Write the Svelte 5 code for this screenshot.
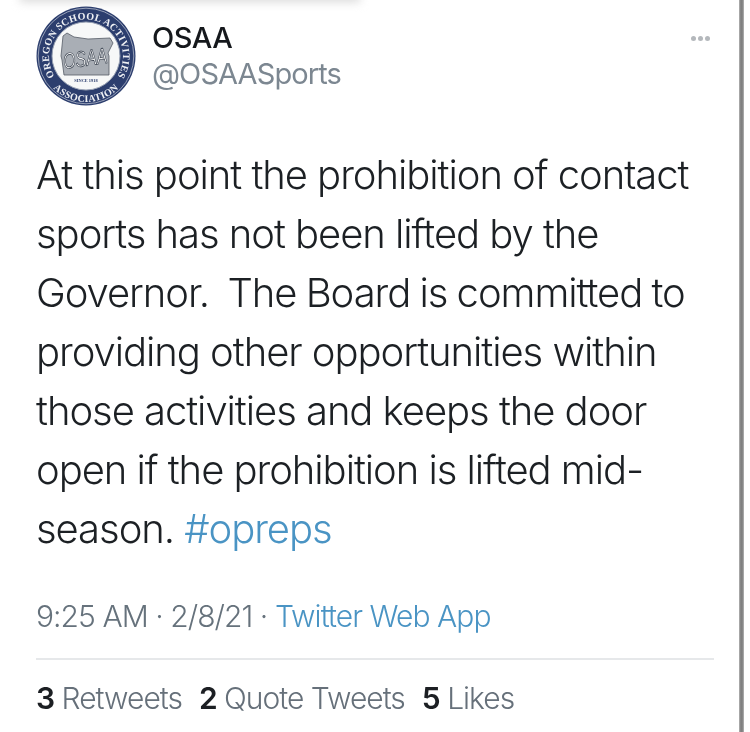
<script>
  const lines = [
    'At this point the prohibition of contact',
    'sports has not been lifted by the',
    'Governor.  The Board is committed to',
    'providing other opportunities within',
    'those activities and keeps the door',
    'open if the prohibition is lifted mid-'
  ];
</script>

<div class="page">
  <div class="topshade"></div>
  <main class="tweet">
    <header class="head">
      <svg class="logo" viewBox="0 0 100 100" aria-hidden="true">
        <defs>
          <path id="arcTop" d="M 18 69 A 37 37 0 1 1 82 69" />
          <path id="arcBottom" d="M 8.3 69.4 A 46 46 0 0 0 91.7 69.4" />
        </defs>
        <circle cx="50" cy="50" r="49.5" fill="#2c3e6e" />
        <circle cx="50" cy="50" r="47.8" fill="none" stroke="#dfe3ea" stroke-width="0.6" />
        <circle cx="50" cy="50" r="34" fill="#f7f8f8" stroke="#9aa3b5" stroke-width="1" />
        <path class="state" d="M27 30 L31 27 L38 31 L52 33 L74 32 L77 37 L72 47 L73 50 L73 69 L28 69 L26 54 L25 50 Z" />
        <text class="osaa" x="49" y="60" text-anchor="middle" textLength="44" lengthAdjust="spacingAndGlyphs" transform="rotate(-8 49 52)">OSAA</text>
        <text class="since" x="50" y="76" text-anchor="middle">SINCE 1918</text>
        <text class="ring"><textPath href="#arcTop" startOffset="50%" text-anchor="middle">OREGON SCHOOL ACTIVITIES</textPath></text>
        <text class="ring"><textPath href="#arcBottom" startOffset="50%" text-anchor="middle">ASSOCIATION</textPath></text>
      </svg>
      <div class="who">
        <div class="name">OSAA</div>
        <div class="handle">@OSAASports</div>
      </div>
      <div class="more"><i></i><i></i><i></i></div>
    </header>

    <div class="body">
      {#each lines as l, i}
        <div class="line" class:tight={i === 2}>{l}</div>
      {/each}
      <div class="line">season. <span class="link">#opreps</span></div>
    </div>

    <div class="meta">9:25 AM · 2/8/21 · <span class="link">Twitter Web App</span></div>
    <div class="rule"></div>
    <div class="stats">
      <span class="stat"><b>3</b> Retweets</span>
      <span class="stat"><b>2</b> Quote Tweets</span>
      <span class="stat"><b>5</b> Likes</span>
    </div>
  </main>
  <div class="edge"></div>
</div>

<style>
  :global(body) {
    margin: 0;
    background: #fff;
  }
  .page {
    position: relative;
    display: flex;
    width: 750px;
    height: 732px;
    overflow: hidden;
    background: #fff;
    font-family: Inter, "Liberation Sans", Arial, sans-serif;
  }
  .topshade {
    position: absolute;
    left: 20px;
    top: -8px;
    width: 340px;
    height: 10px;
    background: #d9d9d9;
    filter: blur(5px);
  }
  .tweet {
    width: 739px;
    padding: 0 25px 0 36px;
    box-sizing: border-box;
    filter: blur(0.4px);
  }
  .edge {
    width: 5px;
    background: linear-gradient(90deg, #b5b5b5, #808080 35%, #808080 65%, #b5b5b5);
  }
  .head {
    display: flex;
    align-items: flex-start;
    height: 145px;
    padding-top: 6px;
    box-sizing: border-box;
  }
  .logo {
    width: 100px;
    height: 100px;
    flex: none;
  }
  .state {
    fill: #a9aeb5;
    stroke: #555c66;
    stroke-width: 0.8;
  }
  .osaa {
    font-size: 22px;
    font-style: italic;
    fill: #f5f5f5;
    stroke: #2f3846;
    stroke-width: 0.7;
    font-family: "Liberation Sans", sans-serif;
  }
  .since {
    font-size: 4.4px;
    font-weight: 700;
    fill: #2c3e6e;
    font-family: "Liberation Serif", serif;
  }
  .ring {
    font-size: 10px;
    font-weight: 700;
    fill: #eef0f4;
    font-family: "Liberation Serif", serif;
    letter-spacing: 0.3px;
  }
  .who {
    margin-left: 16px;
    flex: 1;
  }
  .name {
    font-size: 29px;
    line-height: 36px;
    margin-top: 14px;
    letter-spacing: -0.5px;
    font-weight: 500;
    color: #15181c;
  }
  .handle {
    font-size: 29px;
    line-height: 36px;
    letter-spacing: -0.9px;
    color: #7c8791;
  }
  .more {
    display: flex;
    gap: 2px;
    margin-top: 30px;
    margin-right: 4px;
  }
  .more i {
    width: 5px;
    height: 5px;
    border-radius: 50%;
    background: #b4b8bc;
  }
  .body {
    font-size: 40px;
    line-height: 59px;
    font-weight: 300;
    letter-spacing: -1.05px;
    color: #1c2024;
  }
  .line {
    white-space: pre;
  }
  .tight {
    word-spacing: -1px;
  }
  .link {
    color: #4a94c4;
  }
  .meta {
    margin-top: 38px;
    font-size: 30px;
    line-height: 40px;
    font-weight: 300;
    letter-spacing: -0.95px;
    color: #66727c;
  }
  .rule {
    height: 2px;
    margin-top: 22px;
    background: #e6e8ea;
  }
  .stats {
    display: flex;
    gap: 17px;
    margin-top: 18px;
    font-size: 30px;
    line-height: 40px;
    font-weight: 300;
    letter-spacing: -1px;
    color: #66707a;
  }
  .stat b {
    color: #1c1f23;
    font-weight: 600;
  }
</style>
